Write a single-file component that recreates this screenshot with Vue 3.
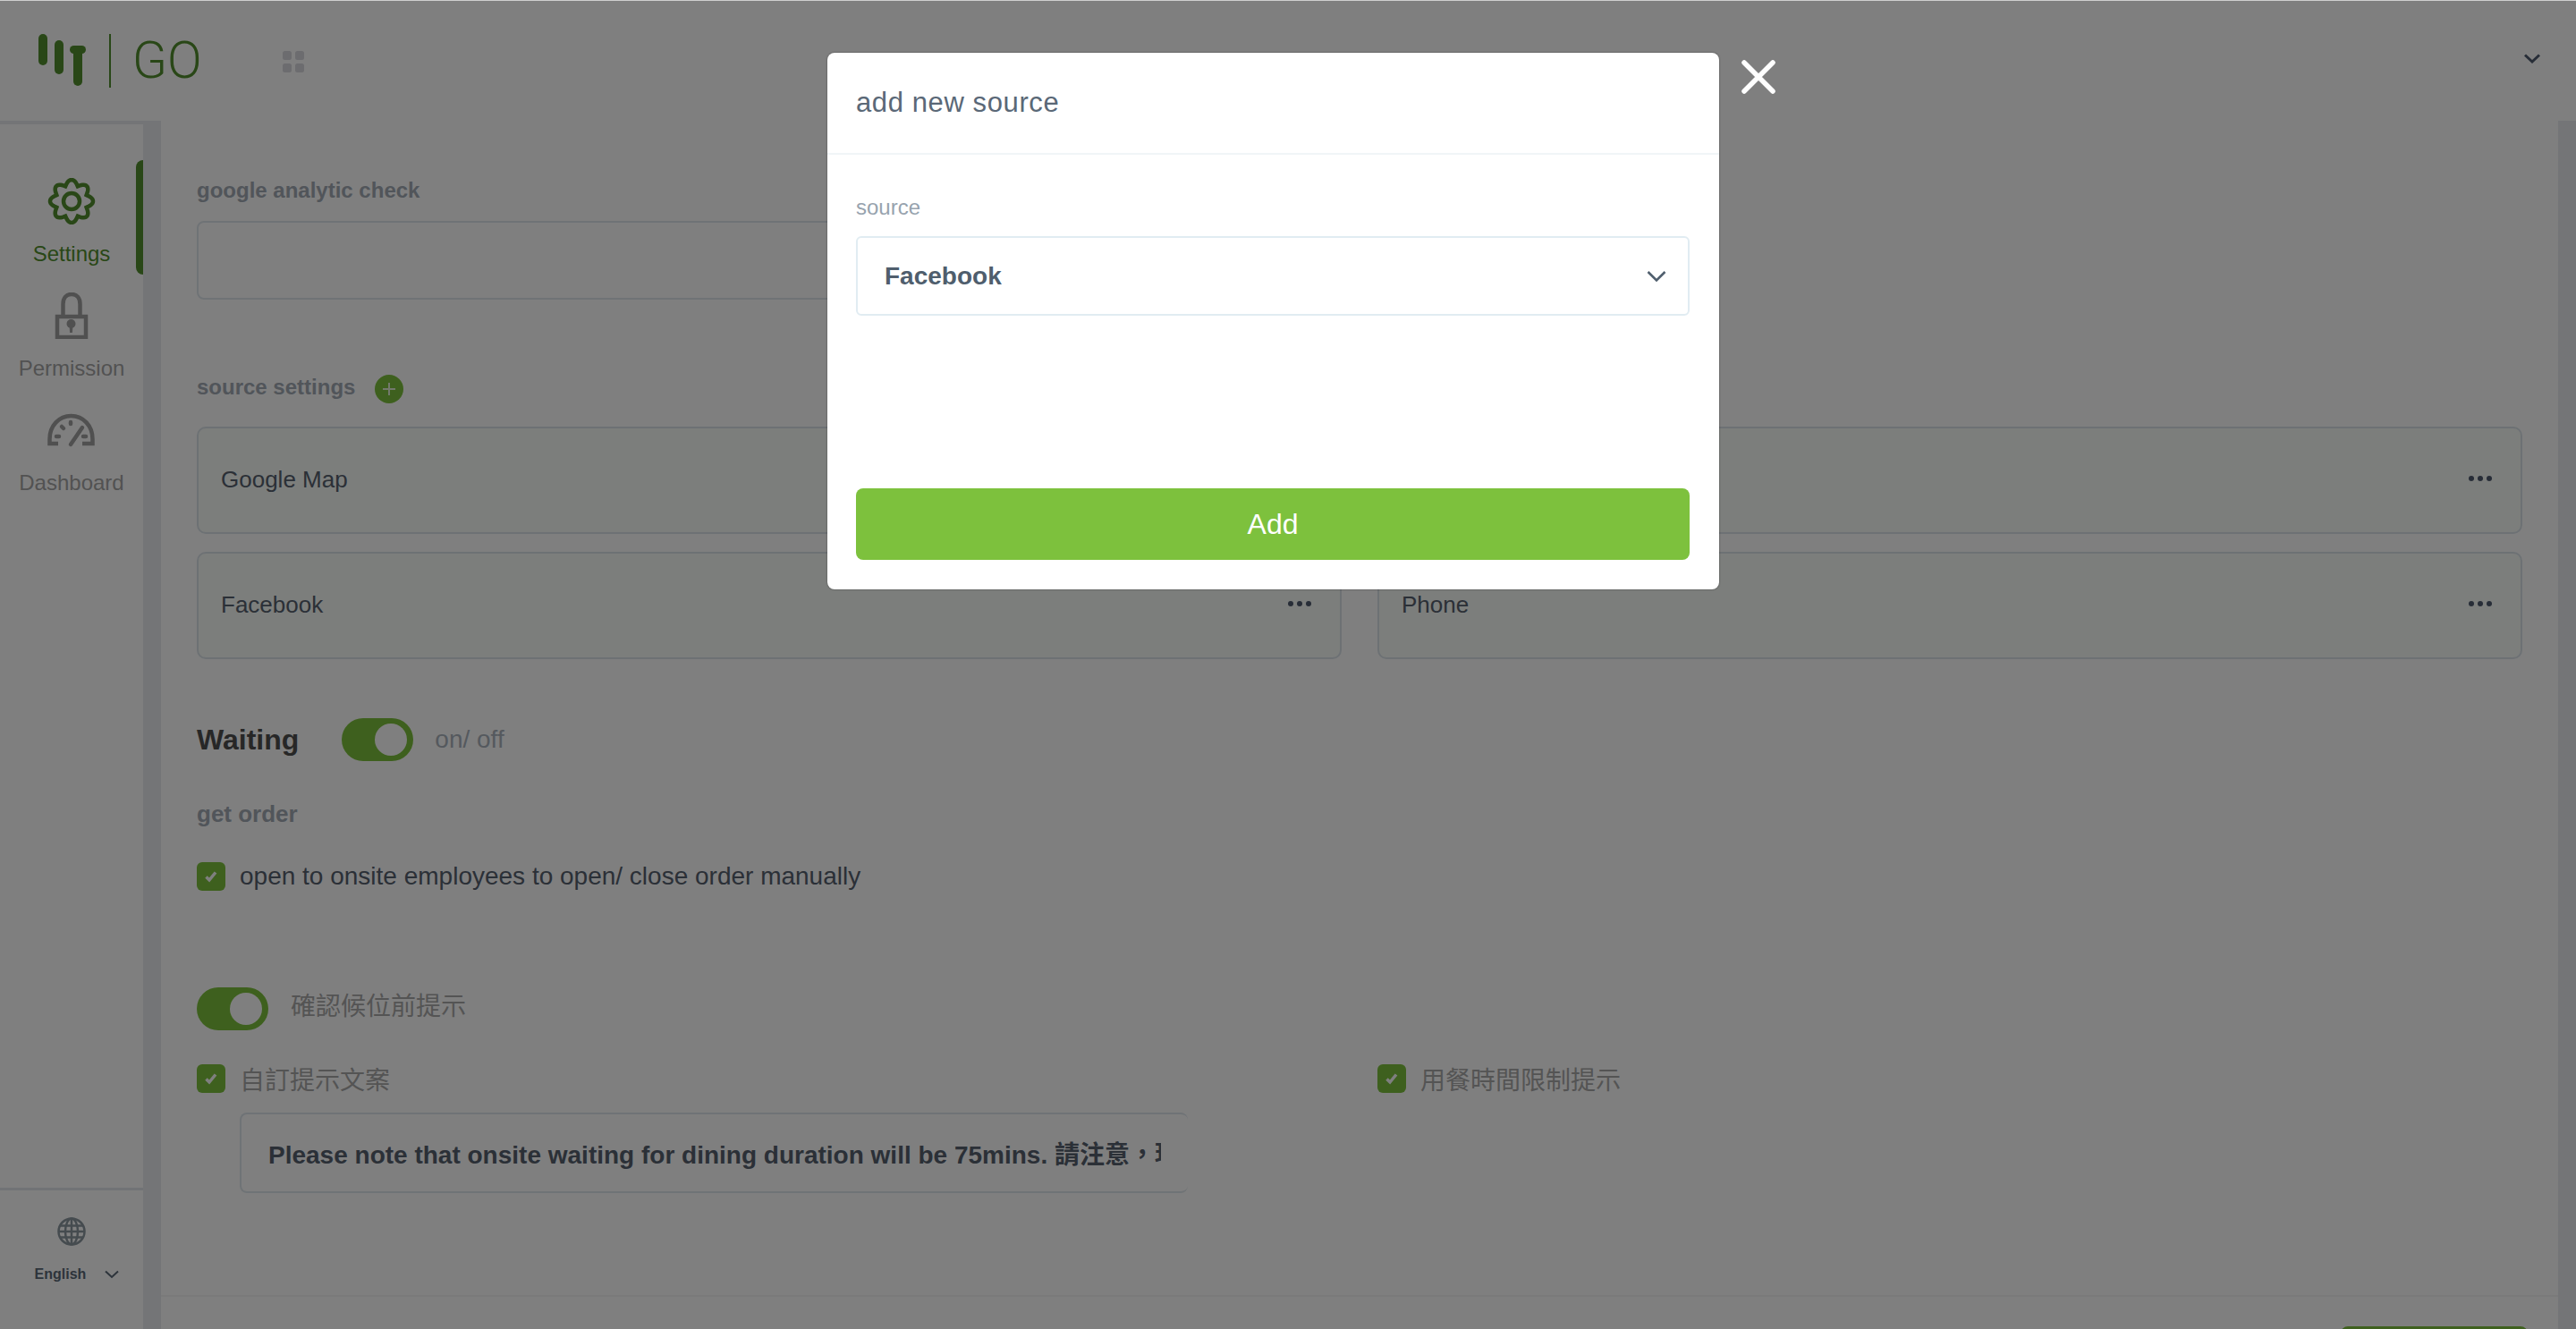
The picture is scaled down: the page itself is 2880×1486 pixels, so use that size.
<template>
  <div class="page">
    <header class="topbar">
      <div class="logo">
        <svg class="logo-mark" width="56" height="60" viewBox="0 0 56 60">
          <rect x="3" y="0" width="10" height="35" rx="5" />
          <rect x="21" y="7" width="10" height="38" rx="5" />
          <rect x="42" y="15" width="10" height="43" rx="5" />
          <rect x="38" y="13" width="18" height="9" rx="4.5" />
        </svg>
        <span class="logo-line"></span>
        <span class="logo-go">GO</span>
      </div>
      <svg class="apps" width="24" height="24" viewBox="0 0 24 24">
        <rect x="0" y="0" width="10" height="10" rx="2.5" />
        <rect x="14" y="0" width="10" height="10" rx="2.5" />
        <rect x="0" y="14" width="10" height="10" rx="2.5" />
        <rect x="14" y="14" width="10" height="10" rx="2.5" />
      </svg>
      <svg class="user-chevron" width="18" height="12" viewBox="0 0 18 12">
        <path d="M1 1.500 9 9l8-7.500" />
      </svg>
    </header>

    <div class="body">
      <aside class="sidebar">
        <nav class="menu">
          <div class="menu-item active">
            <svg width="56" height="52" viewBox="0 0 56 52" class="menu-icon">
              <path :d="gearPath" />
              <circle cx="28" cy="26" r="9" />
            </svg>
            <span>Settings</span>
          </div>
          <div class="menu-item">
            <svg width="56" height="52" viewBox="0 0 56 52" class="menu-icon">
              <path d="M18.500 27V13C18.500 6 22 2 28 2s9.500 4 9.500 11V27" />
              <rect x="12" y="27" width="32" height="23" />
              <circle class="fill" cx="27.500" cy="35" r="5" />
              <path class="fill" d="M25.500 37h4l-.6 8h-2.800z" />
            </svg>
            <span>Permission</span>
          </div>
          <div class="menu-item">
            <svg width="56" height="52" viewBox="0 0 56 52" class="menu-icon">
              <path d="M13 41H3.500V36C3.500 21 14 10 27.500 10S51.500 21 51.500 36V41H40" />
              <path class="round" d="M27 42 40 23M27 17v2M17 22l2 2M11 33h3M41 33h3" />
            </svg>
            <span>Dashboard</span>
          </div>
        </nav>
        <div class="lang">
          <svg width="32" height="32" viewBox="0 0 32 32" class="globe">
            <circle cx="16" cy="16" r="14.500" />
            <ellipse cx="16" cy="16" rx="7" ry="14.500" />
            <path d="M16 1.500v29M3 9.500h26M1.500 16h29M3 22.500h26" />
          </svg>
          <div class="lang-row">
            <span>English</span>
            <svg width="16" height="10" viewBox="0 0 16 10">
              <path d="M1 1.500 8 8l7-6.500" />
            </svg>
          </div>
        </div>
      </aside>

      <main class="main">
        <div class="scroll">
          <label class="field-label analytic">google analytic check</label>
          <div class="text-box"></div>

          <div class="source-head">
            <span class="field-label">source settings</span>
            <span class="plus">
              <svg width="18" height="18" viewBox="0 0 18 18">
                <path d="M9 2v14M2 9h14" />
              </svg>
            </span>
          </div>
          <div class="source-grid">
            <div v-for="s in sources" :key="s" class="source-card">
              <span>{{ s }}</span>
              <span class="dots"><i></i><i></i><i></i></span>
            </div>
          </div>

          <div class="waiting-row">
            <h2>Waiting</h2>
            <span class="toggle"><span class="knob"></span></span>
            <span class="muted">on/ off</span>
          </div>
          <div class="field-label order">get order</div>
          <div class="check-row manual">
            <span class="check"><svg width="16" height="14" viewBox="0 0 16 14"><path d="M2.500 7.500 6 11l7-8.500" /></svg></span>
            <span class="check-text">open to onsite employees to open/ close order manually</span>
          </div>

          <div class="confirm-row">
            <span class="toggle"><span class="knob"></span></span>
            <span class="muted cjk">確認候位前提示</span>
          </div>
          <div class="notice-grid">
            <div>
              <div class="check-row">
                <span class="check"><svg width="16" height="14" viewBox="0 0 16 14"><path d="M2.500 7.500 6 11l7-8.500" /></svg></span>
                <span class="muted cjk">自訂提示文案</span>
              </div>
              <div class="notice-box">
                <div class="notice-text">Please note that onsite waiting for dining duration will be 75mins. 請注意，現場候位用餐時間為75分鐘</div>
              </div>
            </div>
            <div class="check-row">
              <span class="check"><svg width="16" height="14" viewBox="0 0 16 14"><path d="M2.500 7.500 6 11l7-8.500" /></svg></span>
              <span class="muted cjk">用餐時間限制提示</span>
            </div>
          </div>
        </div>
        <footer class="foot">
          <span class="save"></span>
        </footer>
      </main>
    </div>

    <div class="overlay">
      <div class="dialog-wrap">
        <section class="dialog">
          <div class="dialog-head">add new source</div>
          <div class="dialog-body">
            <div class="select-label">source</div>
            <div class="select">
              <span>Facebook</span>
              <svg width="22" height="14" viewBox="0 0 22 14">
                <path d="M1.500 2 11 11.500 20.500 2" />
              </svg>
            </div>
            <button class="add-btn">Add</button>
          </div>
        </section>
        <svg class="close" width="38" height="38" viewBox="0 0 38 38">
          <path d="M3 3l32 32M35 3 3 35" />
        </svg>
      </div>
    </div>
  </div>
</template>

<script setup>
const sources = ['Google Map', '', 'Facebook', 'Phone']

// cog outline, 8 rounded teeth round the centre of the icon
function cog(cx, cy, inner, outer, teeth) {
  const pts = []
  const steps = teeth * 16
  for (let i = 0; i < steps; i++) {
    const a = (i / steps) * Math.PI * 2
    const wave = (Math.cos(a * teeth) + 1) / 2
    const r = inner + (outer - inner) * Math.pow(wave, 0.6)
    pts.push(`${(cx + Math.sin(a) * r).toFixed(2)} ${(cy - Math.cos(a) * r).toFixed(2)}`)
  }
  return 'M' + pts.join('L') + 'Z'
}

const gearPath = cog(28, 26, 18, 24, 8)
</script>

<style>
html,
body {
  margin: 0;
  background: #fff;
}
</style>

<style scoped>
.page {
  position: relative;
  height: 1486px;
  overflow: hidden;
  border-top: 1px solid #cfcfcf;
  box-sizing: border-box;
  background: #fff;
  font-family: "Liberation Sans", "Noto Sans CJK TC", sans-serif;
  color: #3d4a5a;
}

.topbar {
  display: flex;
  align-items: center;
  height: 134px;
  position: relative;
}

.logo {
  display: flex;
  align-items: center;
  width: 276px;
  margin-left: 40px;
  margin-top: -1px;
}

.logo-mark {
  fill: #528f2e;
}

.logo-line {
  width: 2px;
  height: 60px;
  background: #528f2e;
  margin-left: 26px;
  margin-right: 24px;
}

.logo-go {
  font-family: Roboto, sans-serif;
  font-weight: 300;
  font-size: 57px;
  line-height: 60px;
  color: #528f2e;
}

.apps {
  fill: #d8d9de;
  margin-top: 2px;
}

.user-chevron {
  margin-left: auto;
  margin-right: 40px;
  margin-top: -5px;
  fill: none;
  stroke: #4e5a6e;
  stroke-width: 3;
}

.body {
  display: flex;
  height: 1351px;
  background: #e8ebef;
}

.sidebar {
  width: 160px;
  margin-top: 4px;
  margin-right: 20px;
  background: #fff;
  display: flex;
  flex-direction: column;
  justify-content: space-between;
  flex-shrink: 0;
}

.menu {
  padding-top: 40px;
}

.menu-item {
  height: 128px;
  box-sizing: border-box;
  padding-top: 20px;
  display: flex;
  flex-direction: column;
  align-items: center;
  font-size: 24px;
  line-height: 28px;
  color: #a4a4a4;
  position: relative;
}

.menu-item span {
  margin-top: 19px;
}

.menu-icon {
  fill: none;
  stroke: #a0a0a0;
  stroke-width: 4.5;
}

.menu-icon .fill {
  fill: #a0a0a0;
  stroke: none;
}

.menu-icon .round {
  stroke-linecap: round;
}

.menu-item.active {
  color: #528f2e;
}

.menu-item.active .menu-icon {
  stroke: #528f2e;
}

.menu-item.active::after {
  content: "";
  position: absolute;
  right: 0;
  top: 0;
  bottom: 0;
  width: 8px;
  border-radius: 8px 0 0 8px;
  background: #528f2e;
}

.lang {
  height: 158px;
  box-sizing: border-box;
  border-top: 3px solid #e2e7ec;
  padding-top: 30px;
  display: flex;
  flex-direction: column;
  align-items: center;
}

.globe {
  fill: none;
  stroke: #8b979f;
  stroke-width: 2.500;
}

.lang-row {
  display: flex;
  align-items: center;
  gap: 21px;
  margin-top: 22px;
  margin-left: 12px;
  font-size: 16px;
  font-weight: 700;
  line-height: 20px;
  color: #5a6877;
}

.lang-row svg {
  fill: none;
  stroke: #5a6877;
  stroke-width: 2;
}

.main {
  flex: 1;
  margin-right: 20px;
  background: #fff;
  display: flex;
  flex-direction: column;
  overflow: hidden;
}

.scroll {
  height: 1313px;
  flex-shrink: 0;
  box-sizing: border-box;
  padding: 64px 40px 0;
}

.field-label {
  display: block;
  font-size: 24px;
  font-weight: 700;
  line-height: 28px;
  color: #a2aab4;
}

.text-box {
  width: 1280px;
  height: 88px;
  box-sizing: border-box;
  margin-top: 20px;
  border: 2px solid #dfe6ec;
  border-radius: 8px;
}

.source-head {
  display: flex;
  align-items: center;
  gap: 22px;
  margin-top: 84px;
}

.source-head .field-label {
  margin-top: -4px;
}

.plus {
  width: 32px;
  height: 32px;
  border-radius: 50%;
  background: #7dc13d;
  display: flex;
  align-items: center;
  justify-content: center;
  stroke: #e6f3d8;
  stroke-width: 2;
}

.source-grid {
  display: grid;
  grid-template-columns: 1fr 1fr;
  gap: 20px 40px;
  margin-top: 26px;
}

.source-card {
  height: 120px;
  box-sizing: border-box;
  border: 2px solid #dbe3e9;
  border-radius: 10px;
  background: #f8fcf8;
  display: flex;
  align-items: center;
  justify-content: space-between;
  padding: 0 32px 2px 25px;
  font-size: 26px;
  color: #56606e;
}

.dots {
  display: flex;
  gap: 4px;
  margin-top: -2px;
}

.dots i {
  width: 6px;
  height: 6px;
  border-radius: 50%;
  background: #4e5a6e;
}

.waiting-row {
  display: flex;
  align-items: center;
  height: 48px;
  margin-top: 66px;
}

.waiting-row h2 {
  margin: 0 48px 0 0;
  font-size: 32px;
  font-weight: 700;
  color: #4f4f4f;
}

.waiting-row .muted {
  margin-left: 24px;
}

.toggle {
  width: 80px;
  height: 48px;
  box-sizing: border-box;
  padding: 6px 7px;
  border-radius: 24px;
  background: #7dc13d;
  display: flex;
  justify-content: flex-end;
  flex-shrink: 0;
}

.knob {
  width: 36px;
  height: 36px;
  border-radius: 50%;
  background: #fff;
}

.muted {
  font-size: 28px;
  color: #aab3bd;
}

.cjk {
  color: #a9a9a9;
}

.order {
  font-size: 26px;
  line-height: 30px;
  margin-top: 44px;
}

.check-row {
  display: flex;
  align-items: center;
  gap: 16px;
  height: 32px;
}

.manual {
  margin-top: 39px;
}

.check {
  width: 32px;
  height: 32px;
  border-radius: 6px;
  background: #7dc13d;
  display: flex;
  align-items: center;
  justify-content: center;
  flex-shrink: 0;
}

.check svg {
  fill: none;
  stroke: #fff;
  stroke-width: 3.5;
}

.check-text {
  font-size: 28px;
  color: #56606e;
}

.confirm-row {
  display: flex;
  align-items: center;
  gap: 25px;
  margin-top: 108px;
  height: 48px;
}

.confirm-row .muted {
  margin-top: -10px;
}

.notice-grid {
  display: grid;
  grid-template-columns: 1fr 1fr;
  gap: 40px;
  margin-top: 38px;
}

.notice-box {
  width: 1060px;
  height: 90px;
  box-sizing: border-box;
  margin-top: 22px;
  margin-left: 48px;
  border: 2px solid #dfe6ec;
  border-right: 0;
  border-radius: 8px;
  padding: 0 30px;
  display: flex;
  align-items: center;
}

.notice-text {
  white-space: nowrap;
  overflow: hidden;
  font-size: 28px;
  font-weight: 700;
  color: #56606e;
  width: 100%;
}

.foot {
  flex: 1;
  min-height: 0;
  border-top: 2px solid #f4f4f4;
  display: flex;
  justify-content: flex-end;
  padding: 33px 34px 0 0;
}

.save {
  display: block;
  width: 209px;
  height: 80px;
  border-radius: 8px;
  background: #7dc13d;
  flex-shrink: 0;
}

.overlay {
  position: absolute;
  inset: 0;
  background: rgba(0, 0, 0, 0.5);
}

.dialog-wrap {
  position: absolute;
  left: 925px;
  top: 58px;
}

.dialog {
  width: 997px;
  height: 600px;
  background: #fff;
  border-radius: 8px;
  box-shadow: 0 0 2px rgba(0, 0, 0, 0.5);
  overflow: hidden;
}

.dialog-head {
  height: 114px;
  box-sizing: border-box;
  padding: 0 32px;
  display: flex;
  align-items: center;
  font-size: 31px;
  letter-spacing: 0.6px;
  color: #5a6877;
  border-bottom: 2px solid #f1f5f7;
}

.dialog-body {
  padding: 0 33px 0 32px;
}

.select-label {
  margin-top: 45px;
  font-size: 24px;
  line-height: 28px;
  color: #97a3ae;
}

.select {
  height: 89px;
  box-sizing: border-box;
  margin-top: 18px;
  padding: 0 24px 0 30px;
  border: 2px solid #e1ecf2;
  border-radius: 6px;
  display: flex;
  align-items: center;
  justify-content: space-between;
  font-size: 28px;
  font-weight: 700;
  color: #4f5e6d;
}

.select svg {
  fill: none;
  stroke: #4f5e6d;
  stroke-width: 2.500;
}

.add-btn {
  display: block;
  width: 100%;
  height: 80px;
  margin-top: 193px;
  border: 0;
  border-radius: 8px;
  background: #7dc13d;
  font-family: inherit;
  font-size: 32px;
  color: #fff;
}

.close {
  position: absolute;
  left: 1022px;
  top: 8px;
  fill: none;
  stroke: #fff;
  stroke-width: 5.500;
  stroke-linecap: round;
}
</style>
